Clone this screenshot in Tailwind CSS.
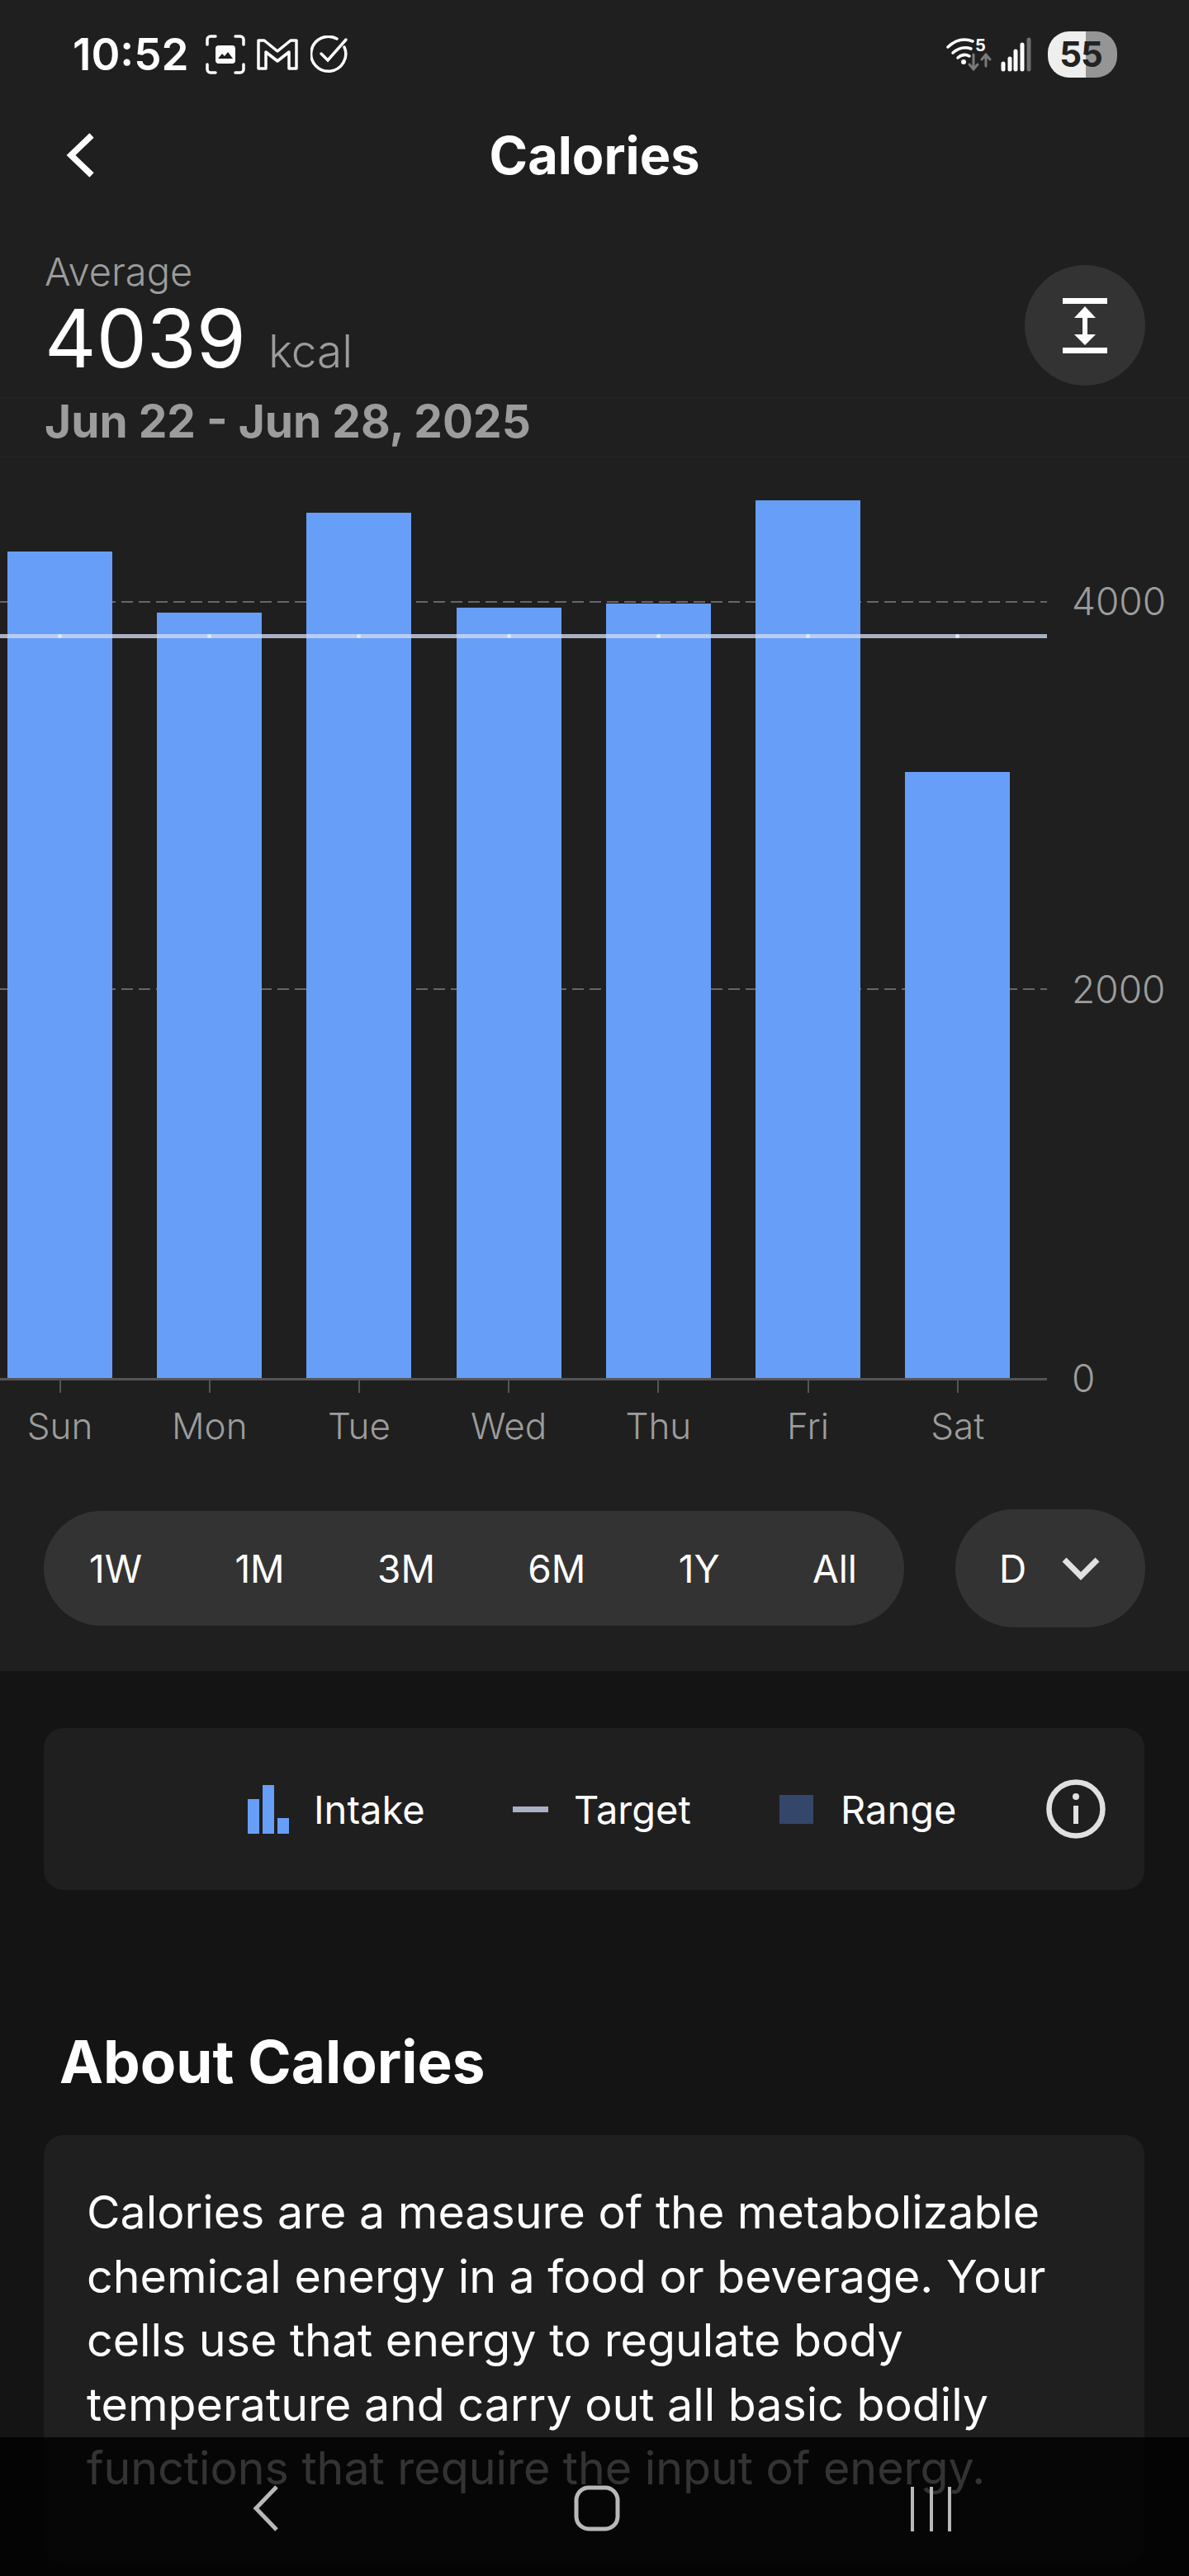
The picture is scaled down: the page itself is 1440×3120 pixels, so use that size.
<!DOCTYPE html>
<html lang="en">
<head>
  <meta charset="UTF-8" />
  <meta name="viewport" content="width=device-width, initial-scale=1.0" />
  <title>Calories</title>
  <script src="https://cdn.jsdelivr.net/npm/@tailwindcss/browser@4"></script>
</head>
<body class="bg-[#141414] font-['Inter',sans-serif] text-white">
<div class="relative w-[1440px] h-[3120px] overflow-hidden">

  <!-- top section -->
  <div class="h-[2024px] bg-[#1f1f1f] flex flex-col">
    <!-- status bar -->
    <div class="h-[132px] flex items-center justify-between pl-[88px] pr-[87px]">
      <div class="flex items-center">
        <span class="w-[161px] text-[53px] leading-none font-semibold">10:52</span>
        <svg width="48" height="48" viewBox="0 0 48 48" fill="none" stroke="white" stroke-width="3.5" stroke-linecap="round"><path d="M2 12V6a4 4 0 0 1 4-4h6M36 2h6a4 4 0 0 1 4 4v6M46 36v6a4 4 0 0 1-4 4h-6M12 46H6a4 4 0 0 1-4-4v-6"/><rect x="12" y="13" width="24" height="22" rx="4" fill="white" stroke="none"/><path d="M15 29l5-6 3 3 4-5 6 8z" fill="#1f1f1f" stroke="none"/></svg>
        <svg class="ml-[14px]" width="50" height="40" viewBox="0 0 50 40" fill="none" stroke="white" stroke-width="3.5" stroke-linejoin="round"><path d="M2 3h7l16 13L41 3h7v34h-9V17L25 28 11 17v20H2z"/></svg>
        <svg class="ml-[15px]" width="46" height="46" viewBox="0 0 46 46" fill="none" stroke="white" stroke-width="3.5" stroke-linecap="round"><path d="M41 14A21 21 0 1 1 32 4"/><path d="M13 22l8 8L43 5"/></svg>
      </div>
      <div class="flex items-center">
        <svg class="-mt-[6px]" width="56" height="48" viewBox="0 -6 56 48" fill="none" stroke="white" stroke-width="3.5" stroke-linecap="round"><path d="M2 12Q16 -1 32 5"/><path d="M8 19Q18 10 30 14"/><path d="M14 25Q21 19 28 23"/><circle cx="21" cy="30" r="3" fill="white" stroke="none"/><text x="35" y="17" font-size="20" font-weight="700" fill="white" stroke="none">5</text><path d="M33 21v17M28 33l5 6 5-6M48 35V22M43 27l5-6 5 6" stroke="#7a7a7a" stroke-width="3"/></svg>
        <svg class="ml-[10px]" width="38" height="42" viewBox="0 0 38 42" fill="none" stroke-width="5" stroke-linecap="round"><path d="M3 39v-7M11 39V26M18 39V17M26 39V9" stroke="white"/><path d="M34 39V3" stroke="#6f6f6f"/></svg>
        <div class="ml-[19px] w-[84px] h-[56px] rounded-[26px] flex items-center justify-center pr-[4px] bg-[linear-gradient(90deg,#eeeeee_55%,#959595_55%)]">
          <span class="text-[#222222] text-[42px] leading-none font-bold tracking-[-1px]">55</span>
        </div>
      </div>
    </div>

    <!-- title row -->
    <div class="relative h-[112px] flex items-center justify-center">
      <svg class="absolute left-[80px] top-[28px]" width="36" height="56" viewBox="0 0 36 56" fill="none" stroke="white" stroke-width="7.5"><path d="M31 4L6 28l25 24"/></svg>
      <span class="text-[63px] leading-none font-bold">Calories</span>
    </div>

    <!-- summary -->
    <div class="relative px-[54px] pt-[60px] h-[309px]">
      <div class="text-[47px] leading-[50px] font-light text-[#9c9c9c]">Average</div>
      <div class="mt-[6px] flex items-baseline">
        <span class="text-[97px] leading-[100px] font-normal">4039</span>
        <span class="ml-[27px] text-[55px] leading-[100px] font-light text-[#9c9c9c]">kcal</span>
      </div>
      <div class="mt-[6px] -mx-[54px] px-[54px] h-[72px] border-y border-[#242424] text-[55px] leading-[56px] font-bold text-[#9c9c9c]">Jun 22 - Jun 28, 2025</div>
      <button class="absolute left-[1241px] top-[77px] w-[146px] h-[146px] rounded-full bg-[#333333] flex items-center justify-center">
        <svg width="54" height="67" viewBox="0 0 54 67"><path d="M0 0h54v7H0zM0 60h54v7H0z" fill="white"/><path d="M27 10l13 14h-10v20h10L27 57 14 44h10V24H14z" fill="white"/></svg>
      </button>
    </div>

    <!-- chart -->
    <div class="relative h-[1116px]">
      <!-- grid lines sit behind the bars -->
      <div class="absolute left-0 top-[175px] w-[1268px] h-[2px] bg-[repeating-linear-gradient(90deg,#666666_0_14px,transparent_14px_21px)]"></div>
      <div class="absolute left-0 top-[644px] w-[1268px] h-[2px] bg-[repeating-linear-gradient(90deg,#666666_0_14px,transparent_14px_21px)]"></div>
      <div class="relative h-full pl-[9px] flex items-end gap-[54.2px]">
        <div class="w-[127px] h-[1001px] bg-[#679ef8]"></div>
        <div class="w-[127px] h-[927px] bg-[#679ef8]"></div>
        <div class="w-[127px] h-[1048px] bg-[#679ef8]"></div>
        <div class="w-[127px] h-[933px] bg-[#679ef8]"></div>
        <div class="w-[127px] h-[938px] bg-[#679ef8]"></div>
        <div class="w-[127px] h-[1063px] bg-[#679ef8]"></div>
        <div class="w-[127px] h-[734px] bg-[#679ef8]"></div>
      </div>
      <!-- target line -->
      <div class="absolute left-0 top-[215px] w-[1268px] h-[5px] bg-[rgba(209,218,244,0.775)] flex items-center gap-[176.2px] pl-[70px]">
        <span class="w-[5px] h-[5px] rounded-full bg-[#dfe8ff]"></span>
        <span class="w-[5px] h-[5px] rounded-full bg-[#dfe8ff]"></span>
        <span class="w-[5px] h-[5px] rounded-full bg-[#dfe8ff]"></span>
        <span class="w-[5px] h-[5px] rounded-full bg-[#dfe8ff]"></span>
        <span class="w-[5px] h-[5px] rounded-full bg-[#dfe8ff]"></span>
        <span class="w-[5px] h-[5px] rounded-full bg-[#dfe8ff]"></span>
        <span class="w-[5px] h-[5px] rounded-full bg-[#dfe8ff]"></span>
      </div>
      <!-- y axis labels -->
      <span class="absolute left-[1298px] top-[150px] text-[46px] leading-[50px] font-light text-[#9c9c9c]">4000</span>
      <span class="absolute left-[1298px] top-[620px] text-[46px] leading-[50px] font-light text-[#9c9c9c]">2000</span>
      <span class="absolute left-[1298px] top-[1091px] text-[46px] leading-[50px] font-light text-[#9c9c9c]">0</span>
    </div>

    <!-- x axis -->
    <div class="w-[1268px] h-[3px] bg-[#555555]"></div>
    <div class="flex -ml-[18px]">
      <div class="w-[181.2px] flex flex-col items-center"><div class="w-[2px] h-[15px] bg-[#555555]"></div><span class="mt-[15px] text-[44px] leading-[50px] font-light text-[#9c9c9c]">Sun</span></div>
      <div class="w-[181.2px] flex flex-col items-center"><div class="w-[2px] h-[15px] bg-[#555555]"></div><span class="mt-[15px] text-[44px] leading-[50px] font-light text-[#9c9c9c]">Mon</span></div>
      <div class="w-[181.2px] flex flex-col items-center"><div class="w-[2px] h-[15px] bg-[#555555]"></div><span class="mt-[15px] text-[44px] leading-[50px] font-light text-[#9c9c9c]">Tue</span></div>
      <div class="w-[181.2px] flex flex-col items-center"><div class="w-[2px] h-[15px] bg-[#555555]"></div><span class="mt-[15px] text-[44px] leading-[50px] font-light text-[#9c9c9c]">Wed</span></div>
      <div class="w-[181.2px] flex flex-col items-center"><div class="w-[2px] h-[15px] bg-[#555555]"></div><span class="mt-[15px] text-[44px] leading-[50px] font-light text-[#9c9c9c]">Thu</span></div>
      <div class="w-[181.2px] flex flex-col items-center"><div class="w-[2px] h-[15px] bg-[#555555]"></div><span class="mt-[15px] text-[44px] leading-[50px] font-light text-[#9c9c9c]">Fri</span></div>
      <div class="w-[181.2px] flex flex-col items-center"><div class="w-[2px] h-[15px] bg-[#555555]"></div><span class="mt-[15px] text-[44px] leading-[50px] font-light text-[#9c9c9c]">Sat</span></div>
    </div>

    <!-- range pills -->
    <div class="mt-[76px] pl-[53px] flex items-center gap-[62px]">
      <div class="w-[1042px] h-[139px] rounded-[70px] bg-[#333333] flex items-center justify-between pl-[55px] pr-[57px] text-[46px] leading-none">
        <span>1W</span><span>1M</span><span>3M</span><span>6M</span><span>1Y</span><span>All</span>
      </div>
      <div class="w-[230px] h-[143px] rounded-[71px] bg-[#333333] flex items-center pl-[53px] text-[46px] leading-none">
        <span>D</span>
        <svg class="ml-[43px]" width="46" height="28" viewBox="0 0 46 28" fill="none" stroke="#e0e0e0" stroke-width="7"><path d="M3 3l20 20L43 3"/></svg>
      </div>
    </div>
  </div>

  <!-- legend card -->
  <div class="mt-[69px] ml-[53px] w-[1333px] h-[196px] rounded-[24px] bg-[#1f1f1f] flex items-center pl-[247px] text-[47px] leading-none">
    <div class="flex items-end gap-[4px] h-[59px] w-[51px]">
      <div class="w-[14px] h-[42px] bg-[#679ef8]"></div>
      <div class="w-[14px] h-[59px] bg-[#679ef8]"></div>
      <div class="w-[14px] h-[19px] bg-[#679ef8]"></div>
    </div>
    <span class="ml-[29px] w-[136px]">Intake</span>
    <div class="ml-[105px] w-[43px] h-[7px] bg-[#a9b0c4]"></div>
    <span class="ml-[31px] w-[142px]">Target</span>
    <div class="ml-[107px] w-[41px] h-[35px] bg-[#34466a]"></div>
    <span class="ml-[33px] w-[137px]">Range</span>
    <svg class="ml-[112px]" width="72" height="72" viewBox="0 0 72 72" fill="none" stroke="#e0e0e0" stroke-width="6.5"><circle cx="36" cy="36" r="32.5"/><path d="M36 32v22" stroke-width="6"/><circle cx="36" cy="21" r="4" fill="#e0e0e0" stroke="none"/></svg>
  </div>

  <!-- about -->
  <h2 class="mt-[168px] ml-[72px] text-[71px] leading-[80px] font-bold">About Calories</h2>
  <div class="mt-[49px] ml-[53px] w-[1333px] h-[520px] rounded-[24px] bg-[#1f1f1f] pl-[52px] pt-[54px] text-[55.5px] leading-[77.5px] whitespace-nowrap">
    Calories are a measure of the metabolizable<br>
    chemical energy in a food or beverage. Your<br>
    cells use that energy to regulate body<br>
    temperature and carry out all basic bodily<br>
    functions that require the input of energy.
  </div>

  <!-- navigation bar overlay -->
  <div class="absolute left-0 top-[2952px] w-[1440px] h-[168px] bg-black/80 flex items-start pt-[58px] pl-[305px]">
    <svg width="32" height="56" viewBox="0 0 32 56" fill="none" stroke="#b8b8b8" stroke-width="5"><path d="M30 2L5 28l25 26"/></svg>
    <svg class="ml-[358px]" width="56" height="56" viewBox="0 0 56 56" fill="none" stroke="#b8b8b8" stroke-width="5"><rect x="3" y="3" width="50" height="50" rx="15"/></svg>
    <div class="ml-[352px] mt-[2px] flex gap-[18.5px]">
      <div class="w-[4px] h-[54px] bg-[#b8b8b8]"></div>
      <div class="w-[4px] h-[54px] bg-[#b8b8b8]"></div>
      <div class="w-[4px] h-[54px] bg-[#b8b8b8]"></div>
    </div>
  </div>
</div>
</body>
</html>
